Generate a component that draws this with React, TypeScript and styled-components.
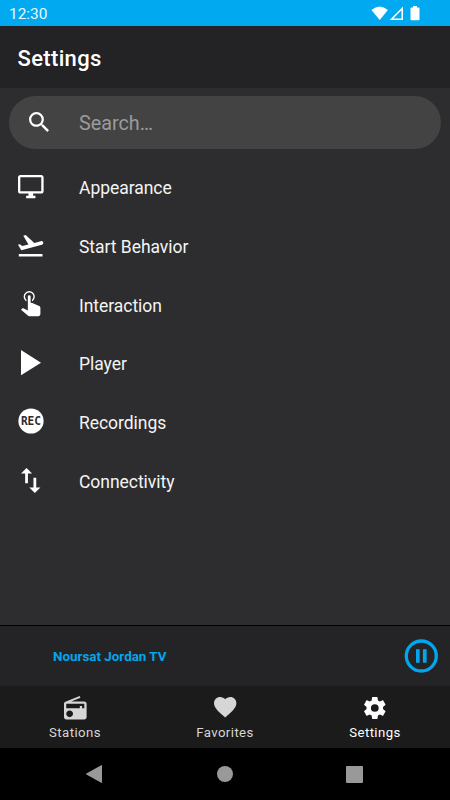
import React from "react";
import styled, { createGlobalStyle } from "styled-components";

const Global = createGlobalStyle`
  * { box-sizing: border-box; }
  body { margin: 0; background: #2d2d2f; }
`;

const Screen = styled.div`
  width: 450px;
  height: 800px;
  display: flex;
  flex-direction: column;
  overflow: hidden;
  background: #2d2d2f;
  color: #f4f4f4;
  font-family: Roboto, "Noto Sans", sans-serif;
`;

const StatusBar = styled.header`
  flex: none;
  height: 26px;
  display: flex;
  align-items: center;
  justify-content: space-between;
  padding: 2px 30px 0 9px;
  background: #01aaf0;
  color: #e8f8ff;
  font-size: 15.4px;
  line-height: 20px;
`;

const StatusIcons = styled.div`
  display: flex;
  align-items: center;
  height: 20px;
  margin-top: -3px;
`;

const AppBar = styled.div`
  flex: none;
  height: 62px;
  display: flex;
  align-items: center;
  padding: 3px 17.5px 0;
  background: #232325;
`;

const Title = styled.h1`
  margin: 0;
  color: #fff;
  font-size: 22px;
  font-weight: 500;
  line-height: 28px;
  letter-spacing: 0.35px;
`;

const SearchField = styled.div`
  flex: none;
  height: 53px;
  margin: 8px 9px 0;
  display: flex;
  align-items: center;
  border-radius: 27px;
  background: #434343;
  color: #9b9b9b;
  font-size: 19.8px;
`;

const SearchGlyph = styled.div`
  width: 70px;
  padding: 0 0 2px 20px;
  display: flex;
  color: #fff;
`;

const SearchLabel = styled.span`
  line-height: 26px;
  padding-top: 2px;
`;

const List = styled.ul`
  flex: 1;
  min-height: 0;
  margin: 0;
  padding: 10.3px 0 0;
  list-style: none;
`;

const Row = styled.li`
  height: 58.7px;
  display: flex;
  align-items: center;
`;

const RowGlyph = styled.div`
  width: 79px;
  height: 28px;
  margin-top: -4px;
  padding-left: 17.5px;
  display: grid;
  grid-template-columns: 26px;
  place-items: center;
  color: #fff;
`;

const RowLabel = styled.span`
  font-size: 17.5px;
  line-height: 24px;
  letter-spacing: -0.04px;
  margin-top: -1px;
`;

const PlayerBar = styled.section`
  flex: none;
  height: 61px;
  display: flex;
  align-items: center;
  justify-content: space-between;
  padding: 0 12px 0 53px;
  border-top: 1px solid #000;
  background: #242426;
  color: #01a6ee;
`;

const StationName = styled.span`
  font-size: 13.4px;
  font-weight: 700;
  line-height: 18px;
  padding-top: 1px;
`;

const PauseGlyph = styled.div`
  padding-bottom: 1px;
`;

const Tabs = styled.nav`
  flex: none;
  height: 62px;
  display: grid;
  grid-template-columns: repeat(3, 1fr);
  background: #1b1b1b;
`;

const Tab = styled.div<{ $active?: boolean }>`
  display: flex;
  flex-direction: column;
  align-items: center;
  padding-top: 9px;
  color: ${(p) => (p.$active ? "#fff" : "#d6d6d6")};
  font-size: 13.2px;
  line-height: 18px;
  letter-spacing: 0.42px;
`;

const TabGlyph = styled.div`
  height: 25px;
  margin-bottom: 4px;
  display: grid;
  place-items: center;
`;

const SystemNav = styled.footer`
  flex: none;
  height: 52px;
  display: grid;
  grid-template-columns: 86px 17px 114px 17px 112px 18px;
  align-items: center;
  background: #000;
  color: #999;
`;

const Glyph = styled.svg`
  display: block;
  fill: currentColor;
  overflow: visible;
`;

const RecText = styled.text`
  font: 700 12.2px "DejaVu Sans Mono", monospace;
  fill: #2d2d2f;
`;

type Shape = { d: string; box: string; w: number; h: number };

const shapes: Record<string, Shape> = {
  search: {
    box: "3 3 17.49 17.49", w: 20, h: 20,
    d: "M15.5 14h-.79l-.28-.27A6.47 6.47 0 0 0 16 9.5 6.5 6.5 0 1 0 9.5 16c1.61 0 3.09-.59 4.23-1.57l.27.28v.79l5 4.99L20.49 19l-4.99-5zm-6 0C7.01 14 5 11.99 5 9.5S7.01 5 9.5 5 14 7.01 14 9.5 11.99 14 9.5 14z",
  },
  monitor: {
    box: "1 2 22 20", w: 25.6, h: 23.2,
    d: "M21 2H3c-1.1 0-2 .9-2 2v12c0 1.1.9 2 2 2h7v2H8v2h8v-2h-2v-2h7c1.1 0 2-.9 2-2V4c0-1.1-.9-2-2-2zm0 14H3V4h18v12z",
  },
  takeoff: {
    box: "1.84 3.57 20.3 17.43", w: 25.3, h: 21.4,
    d: "M2.5 19h19v2h-19v-2zm19.57-9.36c-.21-.8-1.04-1.28-1.84-1.06L14.92 10l-6.9-6.43-1.93.51 4.14 7.17-4.97 1.33-1.97-1.54-1.45.39 1.82 3.16.77 1.33 1.6-.43 5.31-1.42 4.35-1.16L21 11.49c.81-.23 1.28-1.05 1.07-1.85z",
  },
  touch: {
    box: "5.1 5 13.9 18", w: 19.4, h: 25.2,
    d: "M10 9a1 1 0 0 1 2 0v4.47l1.21.13 4.94 2.19c.53.24.85.77.85 1.35v4.36c-.03.82-.68 1.47-1.5 1.5H11c-.38 0-.74-.15-1-.43l-4.9-4.2.74-.77c.19-.21.46-.32.74-.32h.22L10 19V9m1-4a4 4 0 0 1 4 4c0 1.5-.8 2.77-2 3.46v-1.22c.61-.55 1-1.35 1-2.24a3 3 0 0 0-6 0c0 .89.39 1.69 1 2.24v1.22C7.8 11.77 7 10.5 7 9a4 4 0 0 1 4-4z",
  },
  play: { box: "8 5 11 14", w: 20, h: 25.3, d: "M8 5v14l11-7z" },
  swap: {
    box: "5 3 14 18", w: 19.4, h: 25,
    d: "M16 17.01V10h-2v7.01h-3L15 21l4-3.99h-3zM9 3L5 6.99h3V14h2V6.99h3L9 3z",
  },
  radio: {
    box: "2 1 20 21", w: 22.6, h: 23.4,
    d: "M3.24 6.15C2.51 6.43 2 7.17 2 8v12c0 1.1.89 2 2 2h16c1.11 0 2-.9 2-2V8c0-1.11-.89-2-2-2H8.3l8.26-3.34L15.88 1 3.24 6.15zM7 20c-1.66 0-3-1.34-3-3s1.34-3 3-3 3 1.34 3 3-1.34 3-3 3zm13-8h-2v-2h-2v2H4V8h16v4z",
  },
  heart: {
    box: "2 3 20 18.35", w: 22.4, h: 20.6,
    d: "M12 21.35l-1.45-1.32C5.4 15.36 2 12.28 2 8.5 2 5.42 4.42 3 7.5 3c1.74 0 3.41.81 4.5 2.09C13.09 3.81 14.76 3 16.5 3 19.58 3 22 5.42 22 8.5c0 3.78-3.4 6.86-8.55 11.54L12 21.35z",
  },
  cog: {
    box: "2.2 2 19.6 20", w: 21.6, h: 22,
    d: "M12 15.5A3.5 3.5 0 0 1 8.5 12 3.5 3.5 0 0 1 12 8.5a3.5 3.5 0 0 1 3.5 3.5 3.5 3.5 0 0 1-3.5 3.5m7.43-2.53c.04-.32.07-.64.07-.97s-.03-.66-.07-1l2.11-1.63c.19-.15.24-.42.12-.64l-2-3.46c-.12-.22-.39-.31-.61-.22l-2.49 1c-.52-.39-1.06-.73-1.69-.98l-.37-2.65A.506.506 0 0 0 14 2h-4c-.25 0-.46.18-.5.42l-.37 2.65c-.63.25-1.17.59-1.69.98l-2.49-1c-.22-.09-.49 0-.61.22l-2 3.46c-.13.22-.07.49.12.64L4.57 11c-.04.34-.07.67-.07 1s.03.65.07.97l-2.11 1.66c-.19.15-.25.42-.12.64l2 3.46c.12.22.39.3.61.22l2.49-1.01c.52.4 1.06.74 1.69.99l.37 2.65c.04.24.25.42.5.42h4c.25 0 .46-.18.5-.42l.37-2.65c.63-.26 1.17-.59 1.69-.99l2.49 1.01c.22.08.49 0 .61-.22l2-3.46c.12-.22.07-.49-.12-.64l-2.11-1.66z",
  },
};

const Icon = ({ name }: { name: string }) => {
  const s = shapes[name];
  return (
    <Glyph width={s.w} height={s.h} viewBox={s.box} preserveAspectRatio="none" aria-hidden>
      <path d={s.d} />
    </Glyph>
  );
};

const RecIcon = () => (
  <Glyph width={26} height={26} viewBox="0 0 26 26">
    <circle cx="13" cy="13" r="12.6" />
    <RecText x="2.9" y="17.4" textLength="20.2" lengthAdjust="spacingAndGlyphs">REC</RecText>
  </Glyph>
);

const items = [
  { label: "Appearance", icon: "monitor" },
  { label: "Start Behavior", icon: "takeoff" },
  { label: "Interaction", icon: "touch" },
  { label: "Player", icon: "play" },
  { label: "Recordings", icon: "rec" },
  { label: "Connectivity", icon: "swap" },
];

const tabs = [
  { label: "Stations", icon: "radio" },
  { label: "Favorites", icon: "heart" },
  { label: "Settings", icon: "cog", active: true },
];

export default function App() {
  return (
    <>
      <Global />
      <Screen>
        <StatusBar>
          <span>12:30</span>
          <StatusIcons>
            <Glyph width="49" height="16" viewBox="0 0 49 16" color="#fff">
              <path d="M.5 5Q8.700-2 16.900 5L8.700 15z" />
              <path d="M32 1.500V15H18.700zM30.500 5.200L22.300 13.500H30.500z" fillRule="evenodd" />
              <path d="M42 1h4v1.400h1.500q1 0 1 1v10.800q0 1-1 1h-7q-1 0-1-1V3.400q0-1 1-1H42z" />
            </Glyph>
          </StatusIcons>
        </StatusBar>
        <AppBar>
          <Title>Settings</Title>
        </AppBar>
        <SearchField>
          <SearchGlyph>
            <Icon name="search" />
          </SearchGlyph>
          <SearchLabel>Search…</SearchLabel>
        </SearchField>
        <List>
          {items.map((item) => (
            <Row key={item.label}>
              <RowGlyph>{item.icon === "rec" ? <RecIcon /> : <Icon name={item.icon} />}</RowGlyph>
              <RowLabel>{item.label}</RowLabel>
            </Row>
          ))}
        </List>
        <PlayerBar>
          <StationName>Noursat Jordan TV</StationName>
          <PauseGlyph>
            <Glyph width="34" height="34" viewBox="0 0 34 34">
              <circle cx="17.300" cy="17" r="15" fill="none" stroke="currentColor" strokeWidth="3.3" />
              <path d="M12 10.300h3.700v13.400h-3.700zM18.900 10.300h3.700v13.400h-3.700z" />
            </Glyph>
          </PauseGlyph>
        </PlayerBar>
        <Tabs>
          {tabs.map((tab) => (
            <Tab key={tab.label} $active={tab.active}>
              <TabGlyph><Icon name={tab.icon} /></TabGlyph>
              <span>{tab.label}</span>
            </Tab>
          ))}
        </Tabs>
        <SystemNav>
          <span />
          <Glyph width="16" height="18" viewBox="0 0 16 18"><path d="M15.200.2q.8-.4.8.6v16.400q0 1-.8.6L.4 9.600q-.8-.6 0-1.200z" /></Glyph>
          <span />
          <Glyph width="16" height="16" viewBox="0 0 16 16"><circle cx="8" cy="8" r="8" /></Glyph>
          <span />
          <Glyph width="17" height="17" viewBox="0 0 17 17"><rect width="17" height="17" rx="1" /></Glyph>
        </SystemNav>
      </Screen>
    </>
  );
}
